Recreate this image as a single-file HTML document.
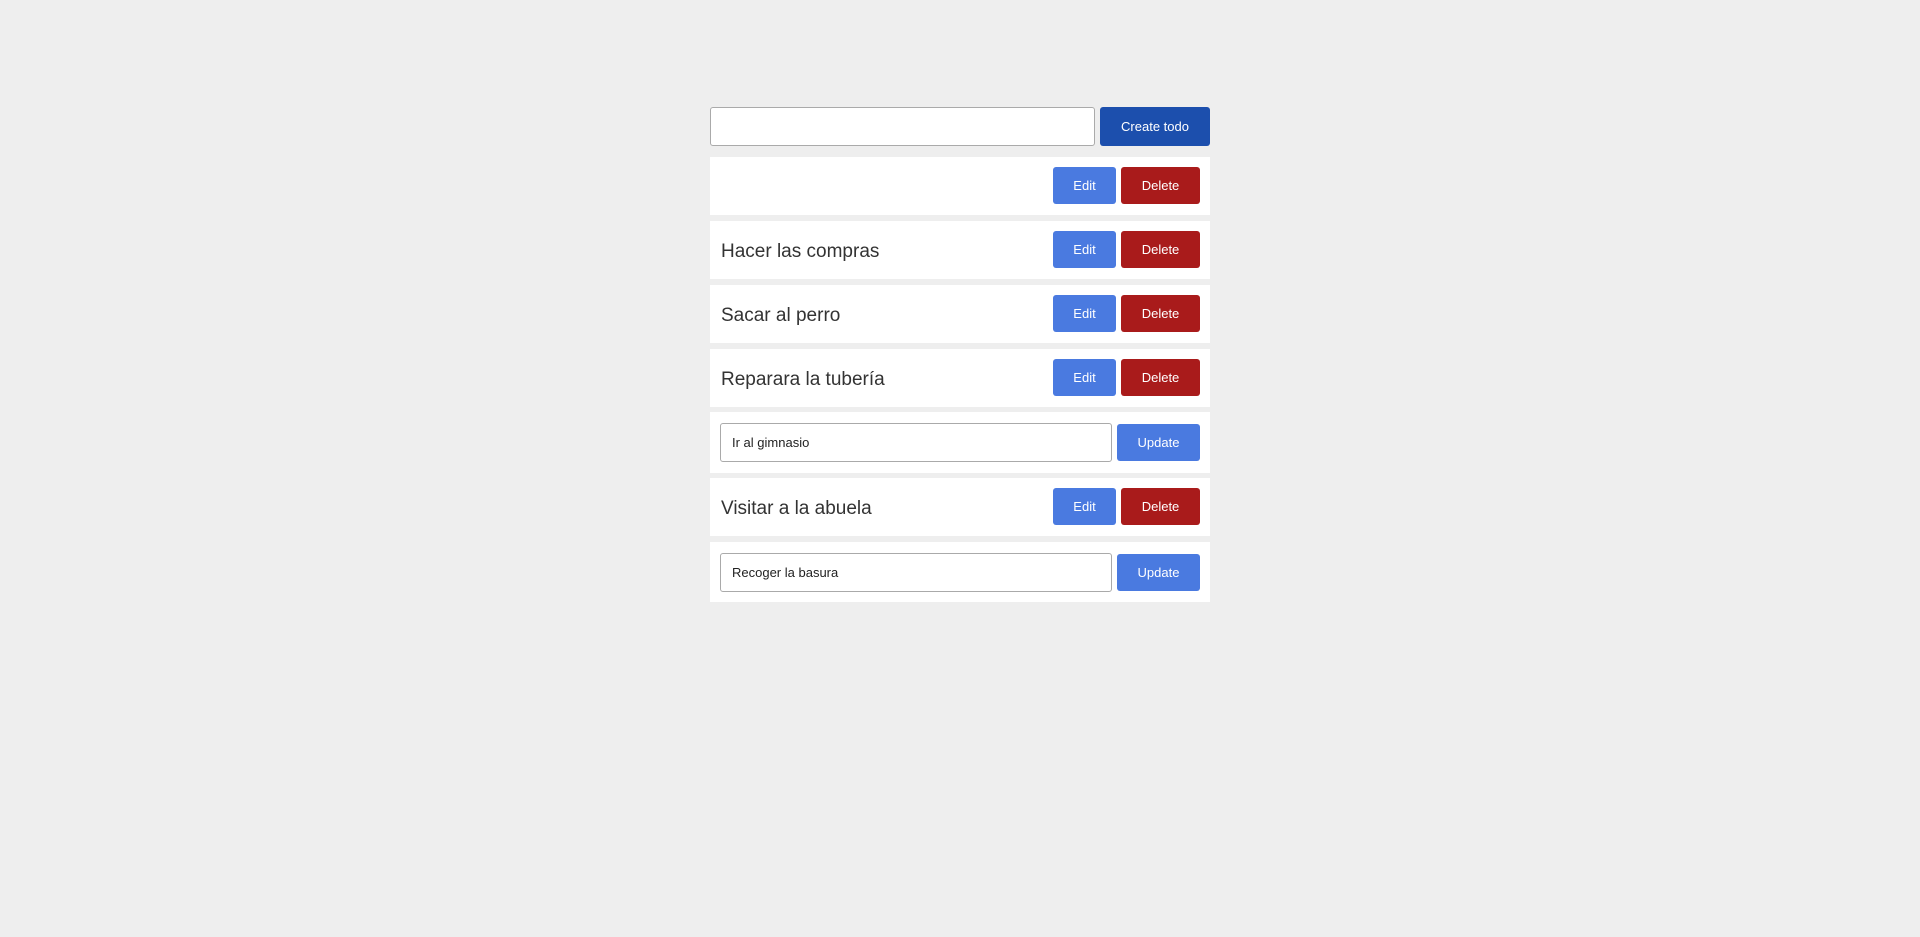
<!DOCTYPE html>
<html><head><meta charset="utf-8"><style>
body{margin:0;background:#eeeeee;width:1920px;height:937px;position:relative;font-family:"Liberation Sans",sans-serif;overflow:hidden}
.a{position:absolute}
.inp{background:#fff;border:1px solid #aaa;border-radius:3px;box-sizing:border-box;font-size:13px;color:#222;padding-left:11px;display:flex;align-items:center}
.btn{border-radius:3px;color:#fff;font-size:13px;display:flex;align-items:center;justify-content:center;box-sizing:border-box}
.row{left:710px;width:500px;background:#fff}
.txt{left:11px;top:2px;font-size:19px;color:#333;display:flex;align-items:center;height:100%}
.e{background:#4a7ae0;width:63px;height:37px;left:343px}
.d{background:#a91b1b;width:79px;height:37px;left:411px}
</style></head><body>
<div class="a inp" style="left:710px;top:107px;width:385px;height:39px"></div>
<div class="a btn" style="left:1100px;top:107px;width:110px;height:39px;background:#1c4fad">Create todo</div>

<div class="a row" style="top:157px;height:58px"><div class="a btn e" style="top:10px">Edit</div><div class="a btn d" style="top:10px">Delete</div></div>
<div class="a row" style="top:221px;height:58px"><div class="a txt">Hacer las compras</div><div class="a btn e" style="top:10px">Edit</div><div class="a btn d" style="top:10px">Delete</div></div>
<div class="a row" style="top:285px;height:58px"><div class="a txt">Sacar al perro</div><div class="a btn e" style="top:10px">Edit</div><div class="a btn d" style="top:10px">Delete</div></div>
<div class="a row" style="top:349px;height:58px"><div class="a txt">Reparara la tubería</div><div class="a btn e" style="top:10px">Edit</div><div class="a btn d" style="top:10px">Delete</div></div>
<div class="a row" style="top:412px;height:61px"><div class="a inp" style="left:10px;top:11px;width:392px;height:39px">Ir al gimnasio</div><div class="a btn" style="left:407px;top:12px;width:83px;height:37px;background:#4a7ae0">Update</div></div>
<div class="a row" style="top:478px;height:58px"><div class="a txt">Visitar a la abuela</div><div class="a btn e" style="top:10px">Edit</div><div class="a btn d" style="top:10px">Delete</div></div>
<div class="a row" style="top:542px;height:60px"><div class="a inp" style="left:10px;top:11px;width:392px;height:39px">Recoger la basura</div><div class="a btn" style="left:407px;top:12px;width:83px;height:37px;background:#4a7ae0">Update</div></div>
</body></html>
